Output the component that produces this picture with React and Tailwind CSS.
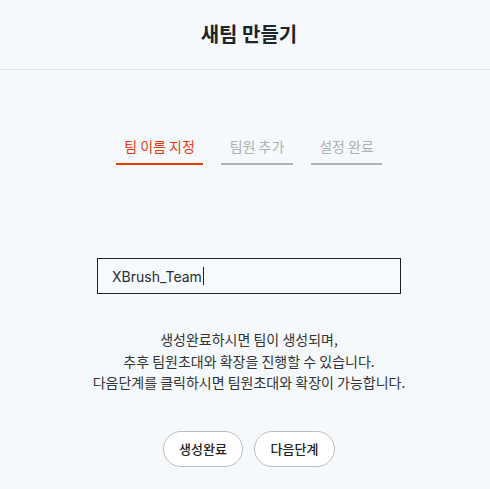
export default function App() {
  const font = { fontFamily: '"Noto Sans CJK KR", "Noto Sans", sans-serif' };
  return (
    <div className="h-[489px] overflow-hidden w-full bg-[#f5f9fc] text-[#222]" style={font}>
      <header className="h-[70px] border-b border-[#dfe3e6] flex items-center justify-center pl-[8px]">
        <h1 className="text-[20px] font-bold text-[#1f232a] leading-none -mt-[2px]">새팀 만들기</h1>
      </header>
      <div className="pl-[8px]">
        <div className="flex justify-center gap-[18px] pt-[66px]">
          <div className="w-[87px] flex flex-col items-center">
            <span className="text-[14px] leading-[20px] text-[#e8390e]">팀 이름 지정</span>
            <div className="mt-[7px] h-[2px] w-full bg-[#e8390e]" />
          </div>
          <div className="w-[72px] flex flex-col items-center">
            <span className="text-[14px] leading-[20px] text-[#b0b0b0]">팀원 추가</span>
            <div className="mt-[7px] h-[2px] w-full bg-[#b3b3b3]" />
          </div>
          <div className="w-[71px] flex flex-col items-center">
            <span className="text-[14px] leading-[20px] text-[#b0b0b0]">설정 완료</span>
            <div className="mt-[7px] h-[2px] w-full bg-[#b3b3b3]" />
          </div>
        </div>
        <div className="flex justify-center pt-[93px]">
          <div className="w-[304px] h-[36px] border border-[#1f2328] bg-[#f7fafc] flex items-center pl-[14px]">
            <span className="text-[14px] text-[#2a2d33]" style={{ fontFamily: '"Inter", "Noto Sans CJK KR", sans-serif' }}>XBrush_Team</span>
            <span className="ml-[1px] w-[1px] h-[18px] bg-[#222]" />
          </div>
        </div>
        <div className="pt-[35px] text-center text-[14px] leading-[21.5px] text-[#333]">
          <p>생성완료하시면 팀이 생성되며,</p>
          <p>추후 팀원초대와 확장을 진행할 수 있습니다.</p>
          <p>다음단계를 클릭하시면 팀원초대와 확장이 가능합니다.</p>
        </div>
        <div className="flex justify-center gap-[11px] pt-[37px]">
          <button className="w-[80px] h-[36px] rounded-full border border-[#bdbdbd] bg-white text-[13px] text-[#222] font-medium">생성완료</button>
          <button className="w-[81px] h-[36px] rounded-full border border-[#bdbdbd] bg-white text-[13px] text-[#222] font-medium">다음단계</button>
        </div>
      </div>
    </div>
  );
}
